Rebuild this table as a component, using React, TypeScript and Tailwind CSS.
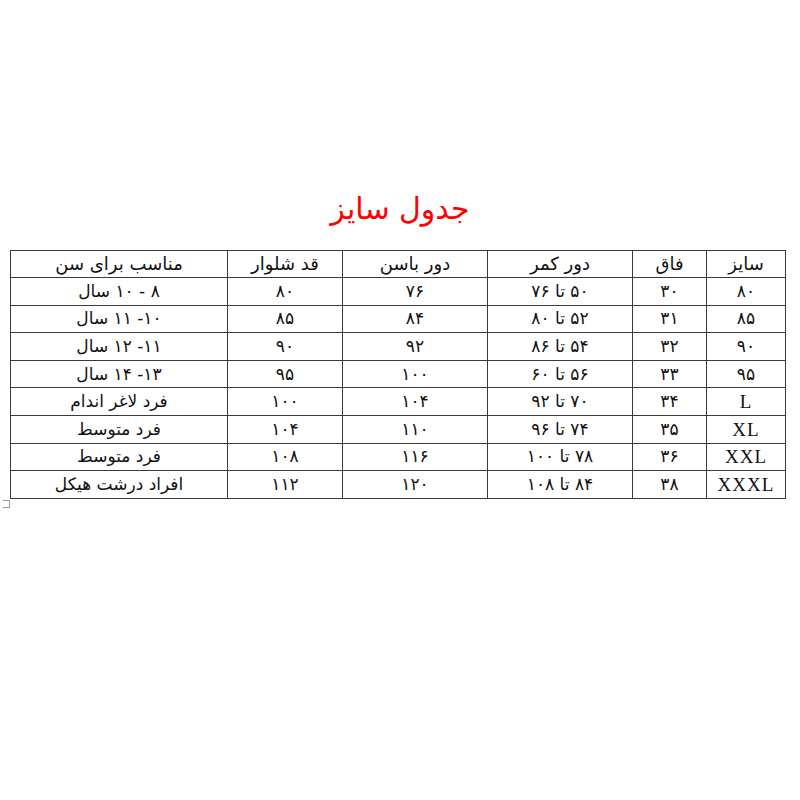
// cells written in visual left-to-right order; "|" splits runs that must keep that order
const rows: string[][] = [
  ['۸۰', '۳۰', '۷۶|تا|۵۰', '۷۶', '۸۰', 'سال|۱۰|-|۸'],
  ['۸۵', '۳۱', '۸۰|تا|۵۲', '۸۴', '۸۵', 'سال|۱۱|-۱۰'],
  ['۹۰', '۳۲', '۸۶|تا|۵۴', '۹۲', '۹۰', 'سال|۱۲|-۱۱'],
  ['۹۵', '۳۳', '۶۰|تا|۵۶', '۱۰۰', '۹۵', 'سال|۱۴|-۱۳'],
  ['L', '۳۴', '۹۲|تا|۷۰', '۱۰۴', '۱۰۰', 'فرد لاغر اندام'],
  ['XL', '۳۵', '۹۶|تا|۷۴', '۱۱۰', '۱۰۴', 'فرد متوسط'],
  ['XXL', '۳۶', '۱۰۰|تا|۷۸', '۱۱۶', '۱۰۸', 'فرد متوسط'],
  ['XXXL', '۳۸', '۱۰۸|تا|۸۴', '۱۲۰', '۱۱۲', 'افراد درشت هیکل'],
];

const headers = ['سایز', 'فاق', 'دور کمر', 'دور باسن', 'قد شلوار', 'مناسب برای سن'];
const widths = ['w-[79px]', 'w-[74px]', 'w-[145px]', 'w-[145px]', 'w-[115px]', 'w-[217px]'];

const isLatin = (s: string) => /^[A-Z]+$/.test(s);

function Visual({ text }: { text: string }) {
  const parts = text.split('|');
  return (
    <span dir="ltr">
      {parts.map((p, i) => (
        <span key={i}>
          {i > 0 && ' '}
          <bdi>{p}</bdi>
        </span>
      ))}
    </span>
  );
}

export default function App() {
  return (
    <div className="w-[800px] h-[800px] bg-white" style={{ fontFamily: '"DejaVu Sans", "Liberation Sans", sans-serif' }}>
      <div className="pt-[189px] h-[250px] text-center">
        <h1 dir="rtl" className="text-[30px] leading-[40px] text-[#ff0000] font-normal">جدول سایز</h1>
      </div>
      <table dir="rtl" className="ml-[10px] w-[775px] border-collapse table-fixed text-[#111]">
        <colgroup>
          {widths.map((w, i) => (
            <col key={i} className={w} />
          ))}
        </colgroup>
        <thead>
          <tr className="h-[27px]">
            {headers.map((h, i) => (
              <th key={i} className="border-[1.5px] border-[#3a3a3a] font-normal text-[18px] leading-none p-0 text-center">
                {h}
              </th>
            ))}
          </tr>
        </thead>
        <tbody>
          {rows.map((r, ri) => (
            <tr key={ri} className="h-[27.6px]">
              {r.map((c, ci) => (
                <td
                  key={ci}
                  className={`border-[1.5px] border-[#3a3a3a] p-0 text-center leading-none ${
                    isLatin(c) ? 'text-[19px] tracking-[1px]' : 'text-[17px]'
                  }`}
                  style={isLatin(c) ? { fontFamily: '"Liberation Serif", serif' } : undefined}
                >
                  <Visual text={c} />
                </td>
              ))}
            </tr>
          ))}
        </tbody>
      </table>
      <div className="ml-[3px] mt-[1px] w-[7px] h-[8px] border-r border-b border-t border-[#999]" />
    </div>
  );
}
